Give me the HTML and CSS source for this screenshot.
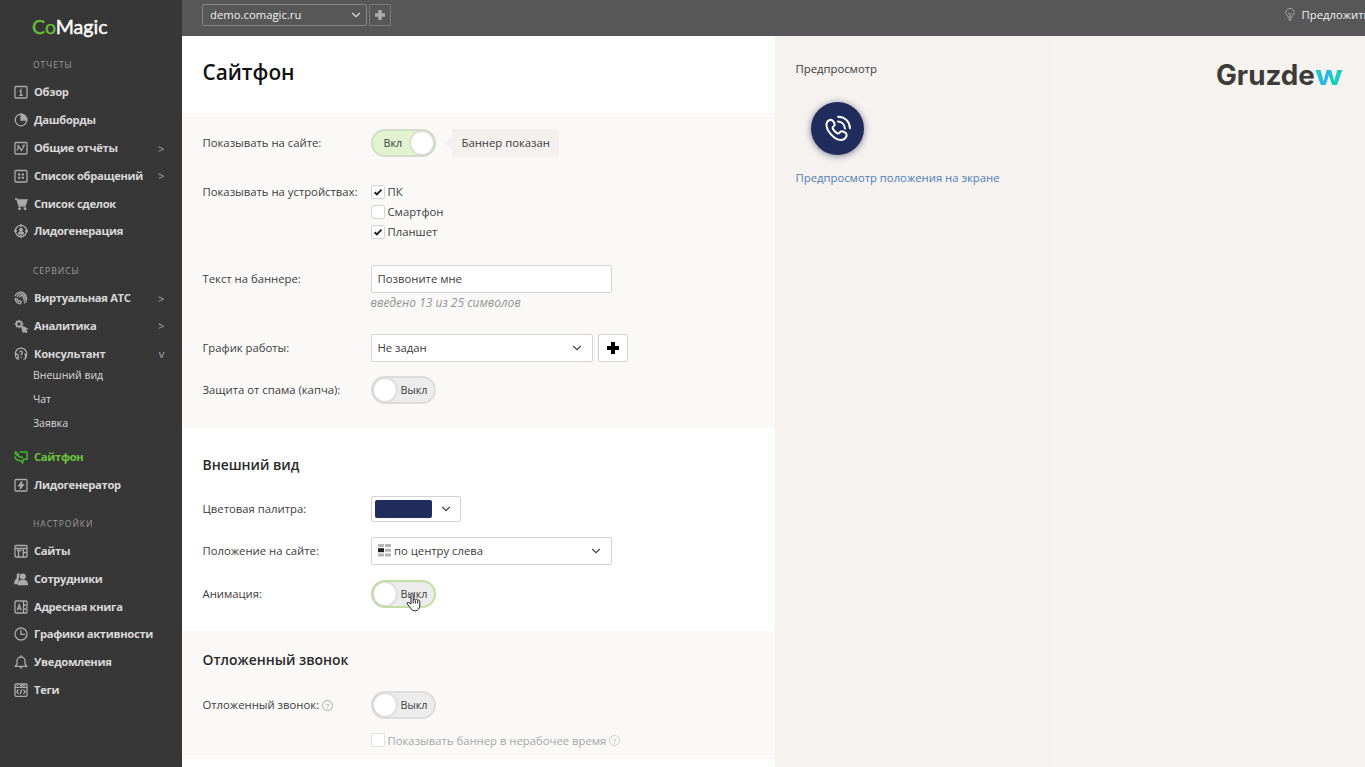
FILE: index.html
```
<!DOCTYPE html>
<html lang="ru">
<head>
  <meta charset="UTF-8">
  <title>CoMagic - Сайтфон</title>
  <link rel="stylesheet" href="styles.css">
</head>
<body>

<div class="app">
  <nav class="sidebar">
    <div class="logo"><span>Co</span>Magic</div>

    <div class="nav-title">ОТЧЕТЫ</div>
    <a class="nav-item"><svg viewBox="0 0 14 14"><rect x="1" y="1.5" width="12" height="11.5" rx="1"/><path d="M5.5 6H7v4M5.3 10.3h3.6M7 3.5v1.3"/></svg><span>Обзор</span></a>
    <a class="nav-item"><svg viewBox="0 0 14 14"><circle cx="7" cy="7" r="5.8"/><path class="fill" d="M7 1.2A5.8 5.8 0 0 1 12.8 7H7z"/></svg><span>Дашборды</span></a>
    <a class="nav-item"><svg viewBox="0 0 14 14"><rect x="1" y="1.5" width="12" height="11.5" rx="1"/><path d="M3 9.5l2-4 2.5 4 2.5-5M3 5h2M8.5 4.5H11"/></svg><span>Общие отчёты</span><i>&gt;</i></a>
    <a class="nav-item"><svg viewBox="0 0 14 14"><rect x="1" y="1.5" width="12" height="11.5" rx="1"/><path d="M4 5.500h2.300M7.700 5.500H10M4 8.800h2.300M7.700 8.800H10" stroke-width="1.900"/></svg><span>Список обращений</span><i>&gt;</i></a>
    <a class="nav-item"><svg viewBox="0 0 14 14"><path d="M1 2h2l2 7h7"/><path class="fill" d="M3.500 3H13l-1.500 4.500H5z"/><circle cx="5.500" cy="11.800" r=".8"/><circle cx="11" cy="11.800" r=".8"/></svg><span>Список сделок</span></a>
    <a class="nav-item"><svg viewBox="0 0 14 14"><circle cx="7" cy="7" r="5.700"/><path d="M7 0v3M7 11v3M0 7h3M11 7h3"/><circle class="fill" cx="7" cy="5.700" r="1.200"/><path class="fill" d="M4.500 9.800c0-2.600 5-2.600 5 0z"/></svg><span>Лидогенерация</span></a>

    <div class="nav-title second">СЕРВИСЫ</div>
    <a class="nav-item"><svg viewBox="0 0 14 14"><path d="M1 5.200A6 6 0 1 1 10 12.200M3.200 6A4 4 0 1 1 9.600 10M5.500 6.500A2 2 0 1 1 8.600 8.300M1.200 7.500c0 3 2.300 5.300 5.300 5.300l.8-2-2-1.200-1 .7C3.500 9.500 3.200 8.500 3.200 8z"/></svg><span>Виртуальная АТС</span><i>&gt;</i></a>
    <a class="nav-item"><svg viewBox="0 0 14 14"><circle cx="5" cy="5" r="2.600" stroke-width="1.800"/><path d="M5 .7v1.500M5 7.800v1.500M.7 5h1.500M7.800 5h1.500M2 2l1 1M8 2L7 3M2 8l1-1"/><path class="fill" d="M7.500 7l5.500 2.800-2 .6 1.800 2.200-1 .9L10 11.300l-.9 1.500z"/></svg><span>Аналитика</span><i>&gt;</i></a>
    <a class="nav-item"><svg viewBox="0 0 14 14"><path d="M2.500 11.500C-.5 5 3 1.200 7 1.200s7.500 3.800 4.500 10.300l-2 .8M2.500 11.500l1.800.5L4 7.500 2 7M11.500 11.500V7.500L10 7"/><path d="M5.600 5.500c.2-2 3-1.600 2.800.1C8.300 6.700 7 6.700 7 8.200M7 9.800v1.100"/></svg><span>Консультант</span><i>v</i></a>
    <div class="subnav">
      <a>Внешний вид</a>
      <a>Чат</a>
      <a>Заявка</a>
    </div>
    <a class="nav-item active"><svg viewBox="0 0 14 14"><path d="M5.500 2H13v7.300H9.500l-1 3.500-2-2.800M1.300 1.500v2.300L5 6.500l4 1M1.300 1.500L5 5M1.300 6.500v1.800L4 10.500h2.500" stroke-width="1.500"/></svg><span>Сайтфон</span></a>
    <a class="nav-item"><svg viewBox="0 0 14 14"><rect x="1" y="1.5" width="12" height="11.5" rx="1"/><path class="fill" d="M7.800 3.500L4.800 7.800h2L6.300 11l3-4.300h-2z"/></svg><span>Лидогенератор</span></a>

    <div class="nav-title third">НАСТРОЙКИ</div>
    <a class="nav-item"><svg viewBox="0 0 14 14"><rect x="1" y="1.5" width="12" height="11.5" rx="1"/><path d="M1 4.500h12M4.500 6.500V13M9.300 4.500V13M3 6.500h4.500M9.300 8.500H13"/></svg><span>Сайты</span></a>
    <a class="nav-item"><svg viewBox="0 0 14 14"><circle class="fill" cx="8.800" cy="4.500" r="2.400"/><path class="fill" d="M4.300 12.500c0-2.500 1.500-3.600 3-4h3c1.700.4 3 1.500 3 4z"/><path class="fill" d="M5 2C3 2 3 3.500 3.500 5.500c0 2-2.500 1.500-2.700 6H3l1-3z"/></svg><span>Сотрудники</span></a>
    <a class="nav-item"><svg viewBox="0 0 14 14"><rect x="1" y="1" width="12" height="12" rx="1"/><path d="M3.300 10.200L5.200 4.800l2 5.400M4 8.500h2.500M9.500 1v12M9.500 5H12M9.500 9H12"/></svg><span>Адресная книга</span></a>
    <a class="nav-item"><svg viewBox="0 0 14 14"><circle cx="7" cy="7" r="6"/><path d="M7 3v4.300h3.800"/></svg><span>Графики активности</span></a>
    <a class="nav-item"><svg viewBox="0 0 14 14"><path d="M1.300 11.300h11.400L11 9V6a4 4 0 0 0-8 0v3zM7 .3V2M5.700 12.800h2.600"/></svg><span>Уведомления</span></a>
    <a class="nav-item"><svg viewBox="0 0 14 14"><rect x="1" y="1" width="12" height="12.300" rx="1"/><path d="M1 4.300h12M3 2.600h1M6 2.600h5M4.500 6.500L2.800 8.700l1.700 2.200M9.500 6.500l1.700 2.200-1.700 2.200M7.700 6.300l-1.400 5"/></svg><span>Теги</span></a>
  </nav>

  <div class="page">
    <header class="topbar">
      <div class="site-select">demo.comagic.ru<svg class="chevron" viewBox="0 0 10 6"><path d="M1.200 1L5 4.600 8.800 1"/></svg></div>
      <button class="site-add"><svg viewBox="0 0 12 12"><path d="M6 1v10M1 6h10"/></svg></button>
      <div class="suggest"><svg viewBox="0 0 12 14"><path d="M4 10c0-1.800-2.500-2.300-2.500-5a4.500 4.500 0 0 1 9 0c0 2.700-2.500 3.200-2.500 5zM4 12h4M5 13.300h2M4 5.500l2 1.500 2-1.500M6 7v3"/></svg>Предложить идею</div>
    </header>

    <div class="content">
      <main class="settings">
        <div class="section head">
          <h1>Сайтфон</h1>
        </div>

        <div class="section gray general">
          <div class="row">
            <label>Показывать на сайте:</label>
            <div class="toggle on"><span>Вкл</span><b></b></div>
            <div class="bubble">Баннер показан</div>
          </div>
          <div class="row devices">
            <label>Показывать на устройствах:</label>
            <div class="checks">
              <div class="check"><em><svg viewBox="0 0 14 14"><path d="M3 7.300l2.700 2.500L11 4.300"/></svg></em>ПК</div>
              <div class="check"><em></em>Смартфон</div>
              <div class="check"><em><svg viewBox="0 0 14 14"><path d="M3 7.300l2.700 2.500L11 4.300"/></svg></em>Планшет</div>
            </div>
          </div>
          <div class="row banner-text">
            <label>Текст на баннере:</label>
            <div class="field">Позвоните мне</div>
          </div>
          <div class="hint">введено 13 из 25 символов</div>
          <div class="row schedule">
            <label>График работы:</label>
            <div class="field short">Не задан<svg class="chevron" viewBox="0 0 10 6"><path d="M1.200 1L5 4.600 8.800 1"/></svg></div>
            <button class="add"><svg viewBox="0 0 12 12"><path d="M6 0v12M0 6h12"/></svg></button>
          </div>
          <div class="row captcha">
            <label>Защита от спама (капча):</label>
            <div class="toggle"><b></b><span>Выкл</span></div>
          </div>
        </div>

        <div class="section look">
          <h2>Внешний вид</h2>
          <div class="row palette">
            <label>Цветовая палитра:</label>
            <div class="color"><span></span><svg class="chevron" viewBox="0 0 10 6"><path d="M1.200 1L5 4.600 8.800 1"/></svg></div>
          </div>
          <div class="row position">
            <label>Положение на сайте:</label>
            <div class="field">
              <svg class="place" viewBox="0 0 13 13"><path d="M0 0h6v3H0zM0 9.500h6v3H0zM7 0h6v3H7zM7 4.700h6v3H7zM7 9.500h6v3H7z" fill="#b5b5b5"/><path d="M0 4.200h6v4H0z" fill="#222"/></svg>
              по центру слева<svg class="chevron" viewBox="0 0 10 6"><path d="M1.200 1L5 4.600 8.800 1"/></svg>
            </div>
          </div>
          <div class="row animation">
            <label>Анимация:</label>
            <div class="toggle hover"><b></b><span>Выкл</span>
              <svg class="cursor" viewBox="0 0 16 20"><path d="M5 12V2.200c0-1.700 2.200-1.700 2.200 0V8c.2-1.300 2.200-1.200 2.200.2.300-1.200 2.200-1 2.200.4.400-1 2.200-.8 2.200.7V13c0 3-1.300 5.800-4.600 5.800-2.700 0-3.900-1.200-5-3.300L1.300 12c-.8-1.500.8-2.200 1.800-1.300z"/><path d="M7.200 8v3.500M9.400 8.500v3M11.600 9v2.500"/></svg>
            </div>
          </div>
        </div>

        <div class="section gray delayed">
          <h2>Отложенный звонок</h2>
          <div class="row call">
            <label>Отложенный звонок: <span class="help">?</span></label>
            <div class="toggle"><b></b><span>Выкл</span></div>
          </div>
          <div class="check disabled"><em></em>Показывать баннер в нерабочее время<span class="help">?</span></div>
        </div>
      </main>

      <aside class="preview">
        <div class="preview-main">
          <p>Предпросмотр</p>
          <div class="phone">
            <svg viewBox="0 0 28 28"><path d="M8.500 5.500C6.500 4.200 3 6 2.600 9.300c-.8 6.700 8.200 16.700 15 16.700 4 0 6.700-4 5.700-6.200-1-2-4.500-3.500-6-2.600-1.300.8-1.400 2.400-2.900 2-2-.6-5-3.800-5.500-5.800-.3-1.400 1.400-1.300 2-2.600.7-1.400-.9-4.300-2.400-5.300zM14.500 6.800c4 .3 7 3.200 7.200 7.200M14.700 1.800c7.300.3 12 5 12.200 12"/></svg>
          </div>
          <a>Предпросмотр положения на экране</a>
        </div>
        <div class="preview-side">
          <div class="gruzdew">Gruzde<span>w</span></div>
        </div>
      </aside>
    </div>
  </div>
</div>

</body>
</html>
```
FILE: styles.css
```
* { box-sizing: border-box; }

body {
  margin: 0;
  width: 1365px;
  height: 767px;
  overflow: hidden;
  font-family: 'Open Sans', 'Noto Sans', sans-serif;
  font-size: 11.3px;
  color: #3c3c3c;
}

.app {
  display: flex;
  height: 767px;
}

.sidebar {
  width: 181.500px;
  flex: none;
  background: #383738;
  color: #d8d8d8;
}

.logo {
  height: 51px;
  padding: 13px 0 0 32px;
  font-family: Lato, sans-serif;
  font-size: 19.600px;
  line-height: 27px;
  color: #fff;
  -webkit-text-stroke: 0.4px currentColor;
}
.logo span { color: #69be38; }

.nav-title {
  height: 27.600px;
  line-height: 27.600px;
  padding-left: 33px;
  font-size: 8.500px;
  letter-spacing: 1px;
  color: #9b9b9b;
}
.nav-title.second { margin-top: 11.500px; }
.nav-title.third { margin-top: 11px; }

.nav-item {
  display: flex;
  align-items: center;
  height: 27.780px;
  padding: 0 17.500px 0 14px;
  font-size: 11.200px;
  font-weight: 700;
  letter-spacing: -0.3px;
  white-space: nowrap;
}
.nav-item span { padding-bottom: 1px; }
.nav-item svg {
  width: 14px;
  height: 14px;
  margin-right: 6px;
  fill: none;
  stroke: #aaa;
  stroke-width: 1.300;
}
.nav-item .fill { fill: #aaa; }
.nav-item i {
  margin-left: auto;
  font-style: normal;
  font-weight: 400;
  color: #aaa;
}
.nav-item.active { color: #68c43c; }
.nav-item.active svg { stroke: #44b52e; }

.subnav {
  margin: -5px 0 8px;
  padding-left: 33px;
  font-size: 10.500px;
}
.subnav a {
  display: block;
  height: 24.200px;
  line-height: 24.200px;
}

.page {
  flex: 1;
  min-width: 0;
}

.topbar {
  height: 36px;
  display: flex;
  align-items: flex-start;
  padding: 4px 0 0 20.500px;
  background: #575757;
  color: #f0f0f0;
  overflow: hidden;
}
.site-select {
  flex: none;
  width: 165px;
  height: 22px;
  display: flex;
  align-items: center;
  justify-content: space-between;
  padding: 0 5px 1px 7px;
  border: 1px solid #858585;
  border-radius: 2px;
}
.chevron {
  width: 10px;
  height: 6px;
  fill: none;
  stroke: #444;
  stroke-width: 1.200;
}
.topbar .chevron { stroke: #ddd; }
.site-add {
  flex: none;
  width: 22px;
  height: 22px;
  margin-left: 2px;
  padding: 0;
  display: flex;
  align-items: center;
  justify-content: center;
  background: none;
  border: 1px solid #7b7b7b;
  border-radius: 2px;
}
.site-add svg {
  width: 12px;
  height: 12px;
  stroke: #aaa;
  stroke-width: 3.500;
}
.suggest {
  flex: none;
  display: flex;
  align-items: center;
  height: 20px;
  margin-left: 892.500px;
  white-space: nowrap;
}
.suggest svg {
  width: 12px;
  height: 13px;
  margin-right: 6px;
  fill: none;
  stroke: #aaa;
}

.content {
  display: flex;
  height: 731px;
}

.settings {
  width: 593.500px;
  background: #fff;
}

.section { padding-left: 21px; }
.section.gray { background: #faf9f8; }
.head {
  height: 77px;
  padding-top: 20px;
}
h1 {
  margin: 0;
  font-size: 20.800px;
  line-height: 33px;
  font-weight: 600;
  color: #111;
}
h2 {
  margin: 0;
  font-size: 13.900px;
  line-height: 20px;
  font-weight: 600;
  color: #2a2a2a;
}

.general {
  height: 315px;
  padding-top: 16px;
}
.look {
  height: 203px;
  padding-top: 27px;
}
.delayed {
  height: 128px;
  padding-top: 19px;
}

.row {
  display: flex;
  align-items: center;
  height: 28px;
}
.row label {
  width: 168px;
  padding-bottom: 1px;
  white-space: nowrap;
}
.devices {
  height: 60px;
  margin-top: 25px;
  align-items: flex-start;
  line-height: 20px;
}
.banner-text { margin-top: 23px; }
.schedule { margin-top: 21px; }
.captcha { margin-top: 14px; }
.palette { margin-top: 20px; }
.position { margin-top: 14px; }
.animation { margin-top: 14.500px; }
.call { margin-top: 20.500px; }

.toggle {
  position: relative;
  width: 65px;
  height: 28px;
  display: flex;
  align-items: center;
  border: 2px solid #dedddd;
  border-radius: 14px;
  background: #ececec;
  font-size: 10.800px;
}
.toggle b {
  width: 22px;
  height: 22px;
  margin-left: 1px;
  border-radius: 50%;
  background: #fff;
  box-shadow: 0 0 2px 1px #d2d1d1;
}
.toggle span { margin-left: 5px; padding-bottom: 1px; }
.toggle.on {
  background: #e2f3d0;
  border-color: #d3ddc8;
}
.toggle.on span { margin-left: 11px; }
.toggle.on b { margin-left: auto; margin-right: 1px; }
.toggle.hover { border-color: #bfe0a0; }
.cursor {
  position: absolute;
  left: 33px;
  top: 10px;
  width: 16px;
  height: 20px;
  fill: #fff;
  stroke: #222;
}

.bubble {
  position: relative;
  height: 28px;
  line-height: 28px;
  margin-left: 16px;
  padding: 0 9px 0 10px;
  background: #f3f0ed;
  border-radius: 2px;
}
.bubble::before {
  content: '';
  position: absolute;
  left: -7px;
  top: 7px;
  border: 7px solid transparent;
  border-left: 0;
  border-right-color: #f3f0ed;
}

.check {
  display: flex;
  align-items: center;
  height: 20px;
}
.check em {
  width: 14px;
  height: 14px;
  margin-right: 3px;
  border: 1px solid #d4d4d4;
  border-radius: 2px;
  background: #fff;
}
.check svg {
  display: block;
  width: 12px;
  height: 12px;
  fill: none;
  stroke: #222;
  stroke-width: 2.200;
}
.disabled {
  margin: 11.500px 0 0 168px;
  color: #a6a6a6;
}
.disabled em { border-color: #e2e2e2; }

.field {
  width: 241px;
  height: 28px;
  display: flex;
  align-items: center;
  padding: 0 10px 1px 6px;
  background: #fff;
  border: 1px solid #d3d3d3;
  border-radius: 2px;
}
.field.short { width: 222px; }
.field .chevron { margin-left: auto; }
.place {
  width: 13px;
  height: 13px;
  margin-right: 3.500px;
}
.hint {
  margin-left: 168px;
  height: 20px;
  line-height: 19px;
  font-size: 12px;
  font-style: italic;
  color: #949494;
}
.add {
  width: 30px;
  height: 28px;
  margin-left: 5px;
  padding: 0;
  display: flex;
  align-items: center;
  justify-content: center;
  background: #fff;
  border: 1px solid #d3d3d3;
  border-radius: 2px;
}
.add svg {
  width: 12px;
  height: 12px;
  stroke: #000;
  stroke-width: 4;
}
.color {
  width: 90px;
  height: 26px;
  display: flex;
  align-items: center;
  padding-left: 3px;
  border: 1px solid #d3d3d3;
  border-radius: 2px;
}
.color span {
  width: 57px;
  height: 18px;
  margin-right: 9px;
  border-radius: 2px;
  background: #202c5b;
}
.help {
  display: inline-block;
  width: 11px;
  height: 11px;
  border: 1px solid #aaa;
  border-radius: 50%;
  font-size: 8px;
  line-height: 9px;
  text-align: center;
  color: #999;
}
.disabled .help { margin-left: 3px; border-color: #ccc; color: #bbb; }

.preview {
  flex: 1;
  display: flex;
  background: #f5f2f0;
}
.preview-main {
  width: 276px;
  padding: 23px 0 0 20.500px;
  border-right: 1px solid #f1eeec;
}
.preview-main p {
  margin: 0;
  line-height: 20px;
}
.phone {
  width: 53px;
  height: 53px;
  margin: 23px 0 0 15px;
  display: flex;
  align-items: center;
  justify-content: center;
  border-radius: 50%;
  background: #202c5b;
  box-shadow: 0 1px 7px rgba(30, 30, 60, 0.55);
}
.phone svg {
  width: 27px;
  height: 27px;
  fill: none;
  stroke: #fff;
  stroke-width: 2.100;
  stroke-linecap: round;
}
.preview-main a {
  display: block;
  margin-top: 13px;
  line-height: 20px;
  color: #4f7db8;
  white-space: nowrap;
}
.gruzdew {
  display: flex;
  margin: 21px 0 0 165px;
  font-family: Inter, sans-serif;
  font-size: 27.800px;
  line-height: 36px;
  font-weight: 700;
  color: #3d3b38;
}
.gruzdew span {
  background: linear-gradient(100deg, #16cfbd 20%, #2cb5ea 35%, #2cb5ea 50%, #12d3ad 62%, #2bc4e0);
  -webkit-background-clip: text;
  background-clip: text;
  color: transparent;
  transform: scaleX(1.18);
  transform-origin: left;
}
```
